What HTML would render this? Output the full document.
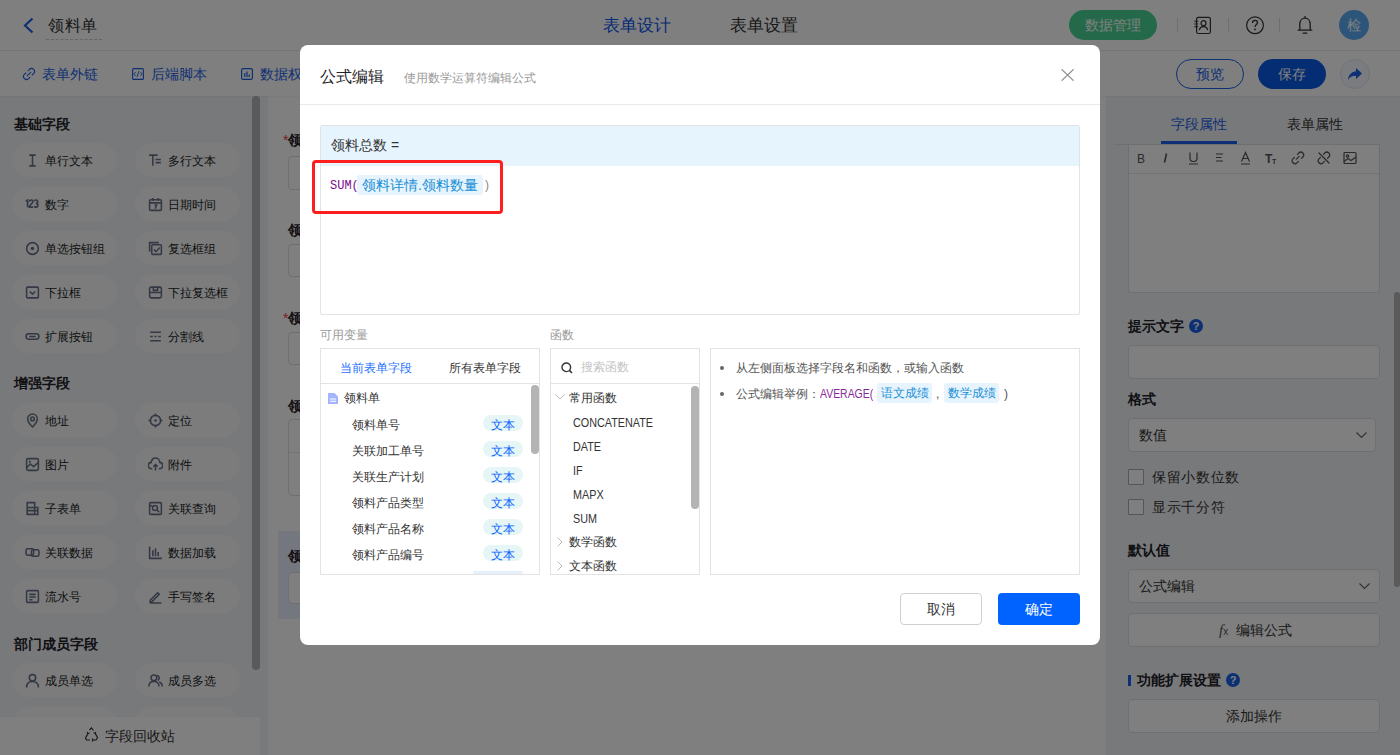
<!DOCTYPE html>
<html><head><meta charset="utf-8">
<style>
*{box-sizing:border-box;margin:0;padding:0}
html,body{width:1400px;height:755px;overflow:hidden;background:#fff}
body{font-family:"Liberation Sans",sans-serif;color:#333;position:relative;font-weight:350}
.a{position:absolute}
.nw{white-space:nowrap}
/* header */
#hdr{left:0;top:0;width:1400px;height:51px;background:#fff;border-bottom:1px solid #e6e8eb}
#bar2{left:0;top:51px;width:1400px;height:45px;background:#fff;box-shadow:0 1px 2px rgba(0,0,0,.05);z-index:1}
.lnk{font-size:14px;color:#1a5fe6;line-height:14px}
#side{left:0;top:96px;width:268px;height:659px;background:#f1f2f6}
.sec{font-size:14px;font-weight:bold;color:#1f2329;line-height:16px}
.chip{width:105px;height:34px;border-radius:17px;background:#f8f9fb}
.chip span{position:absolute;left:33px;top:12px;font-size:12px;line-height:12px;color:#1a1d23;white-space:nowrap;font-weight:400}
.chip svg{position:absolute;left:13px;top:9.5px;width:15px;height:15px}
#canvas{left:268px;top:96px;width:838px;height:659px;background:#fff}
#rp{left:1106px;top:96px;width:294px;height:659px;background:#f1f2f6}
.inp{background:#fff;border:1px solid #dcdfe6;border-radius:4px}
.lbl{font-size:14px;font-weight:bold;color:#1f2329;line-height:16px}
#ov{left:0;top:0;width:1400px;height:755px;background:rgba(0,0,0,.5);z-index:10}
/* modal */
#modal{left:300px;top:45px;width:800px;height:600px;background:#fff;border-radius:8px;overflow:hidden;z-index:11}
.m{position:absolute}
.nl{transform:scaleX(0.83);transform-origin:0 0;font-size:13px!important;margin-top:1px}
.nl2{transform:scaleX(0.87);transform-origin:0 0}
</style></head><body>

<!-- ============ HEADER ============ -->
<div id="hdr" class="a">
  <svg class="a" style="left:22px;top:17px" width="13" height="17" viewBox="0 0 13 17"><path d="M10.5 1.5 L3 8.5 L10.5 15.5" fill="none" stroke="#1a5fe6" stroke-width="2.2"/></svg>
  <div class="a nw" style="left:48px;top:17px;font-size:16px;line-height:18px;color:#333;letter-spacing:0.5px">领料单</div>
  <div class="a" style="left:46px;top:39px;width:56px;height:0;border-top:1px dashed #c8c8c8"></div>
  <div class="a nw" style="left:603px;top:16px;font-size:17px;line-height:19px;color:#0d56ee">表单设计</div>
  <div class="a nw" style="left:730px;top:16px;font-size:17px;line-height:19px;color:#333">表单设置</div>
  <div class="a" style="left:1069px;top:10px;width:88px;height:30px;border-radius:15px;background:#48d494"></div>
  <div class="a nw" style="left:1085px;top:17px;font-size:14px;line-height:16px;color:#fff">数据管理</div>
  <div class="a" style="left:1177px;top:18px;width:1px;height:14px;background:#ddd"></div>
  <div class="a" style="left:1228px;top:18px;width:1px;height:14px;background:#ddd"></div>
  <div class="a" style="left:1279px;top:18px;width:1px;height:14px;background:#ddd"></div>

  <svg class="a" style="left:1193px;top:16px" width="19" height="19" viewBox="0 0 19 19"><rect x="3.6" y="1.3" width="13.8" height="16.2" rx="1.8" fill="none" stroke="#333" stroke-width="1.2"/><circle cx="10.5" cy="7.2" r="2.5" fill="none" stroke="#333" stroke-width="1.2"/><path d="M6.3 14.2 C6.8 11.6 8.3 10.6 10.5 10.6 C12.7 10.6 14.2 11.6 14.7 14.2" fill="none" stroke="#333" stroke-width="1.2"/><path d="M1.2 5.2 H5.2 M1.2 8 H5.2 M1.2 10.8 H5.2" stroke="#333" stroke-width="1.1"/></svg>
  <svg class="a" style="left:1245px;top:15px" width="20" height="20" viewBox="0 0 20 20"><circle cx="10" cy="10.3" r="8.4" fill="none" stroke="#333" stroke-width="1.2"/><path d="M7.5 8 C7.5 6.3 8.6 5.4 10 5.4 C11.5 5.4 12.5 6.3 12.5 7.7 C12.5 9.5 10 9.6 10 11.9" fill="none" stroke="#333" stroke-width="1.3"/><circle cx="10" cy="14.4" r="0.9" fill="#333"/></svg>
  <svg class="a" style="left:1297px;top:15px" width="16" height="20" viewBox="0 0 16 20"><path d="M8 1.3 V2.8 M2.8 15.2 V9.2 C2.8 5.8 5 3.2 8 3.2 C11 3.2 13.2 5.8 13.2 9.2 V15.2 M1.2 15.2 H14.8 M6.2 18.2 H9.8" fill="none" stroke="#333" stroke-width="1.3" stroke-linecap="round"/></svg>
  <div class="a" style="left:1339px;top:10px;width:30px;height:30px;border-radius:15px;background:#5aabf5"></div>
  <div class="a nw" style="left:1347px;top:17px;font-size:14px;line-height:16px;color:#fff">检</div>
</div>

<!-- ============ BAR 2 ============ -->
<div id="bar2" class="a">
  <div class="a lnk nw" style="left:42px;top:16px">表单外链</div>
  <div class="a lnk nw" style="left:151px;top:16px">后端脚本</div>
  <div class="a lnk nw" style="left:260px;top:16px">数据权限</div>
  <div class="a" style="left:1176px;top:8px;width:68px;height:30px;border-radius:15px;border:1px solid #1a5fe6"></div>
  <div class="a nw" style="left:1196px;top:15px;font-size:14px;line-height:16px;color:#1a5fe6;font-weight:500">预览</div>
  <div class="a" style="left:1258px;top:8px;width:68px;height:30px;border-radius:15px;background:#0a5ae6"></div>
  <div class="a nw" style="left:1278px;top:15px;font-size:14px;line-height:16px;color:#fff;font-weight:500">保存</div>
  <div class="a" style="left:1340px;top:8px;width:30px;height:30px;border-radius:15px;border:1px solid #dfe6f5;background:#f5f8ff"></div>

  <svg class="a" style="left:22px;top:16px" width="14" height="14" viewBox="0 0 14 14"><path d="M5.3 8.7 L8.7 5.3 M6.2 3.6 L7.4 2.4 A2.8 2.8 0 0 1 11.6 6.6 L10.2 8 M3.8 6 L2.4 7.4 A2.8 2.8 0 0 0 6.6 11.6 L7.9 10.3" fill="none" stroke="#1a5fe6" stroke-width="1.1" stroke-linecap="round"/></svg>
  <svg class="a" style="left:132px;top:17px" width="12" height="12" viewBox="0 0 12 12"><rect x="0.6" y="0.6" width="10.8" height="10.8" rx="1" fill="none" stroke="#1a5fe6" stroke-width="1.1"/><path d="M3.6 4 L1.8 6 L3.6 8 M8.4 4 L10.2 6 L8.4 8 M7 3 L5 9" fill="none" stroke="#1a5fe6" stroke-width="0.9"/></svg>
  <svg class="a" style="left:241px;top:17px" width="12" height="12" viewBox="0 0 12 12"><rect x="0.6" y="0.6" width="10.8" height="10.8" rx="1.5" fill="none" stroke="#1a5fe6" stroke-width="1.2"/><path d="M3.8 5 V9 M6 3.5 V9 M8.2 6.5 V9" stroke="#1a5fe6" stroke-width="1.2"/></svg>
  <svg class="a" style="left:1346px;top:14px" width="18" height="18" viewBox="0 0 18 18"><path d="M10 3 L16 8.5 L10 14 V10.8 C6 10.8 3.6 12 2 15 C2.3 10.5 4.8 7 10 6.3 Z" fill="#1a5fe6"/></svg>
</div>

<!-- ============ SIDEBAR ============ -->
<div id="side" class="a">
<div class="a sec nw" style="left:14px;top:20px">基础字段</div>
<div class="a sec nw" style="left:14px;top:279px">增强字段</div>
<div class="a sec nw" style="left:14px;top:540px">部门成员字段</div>
<div class="a chip" style="left:12px;top:47px"><svg width="14" height="14" viewBox="0 0 14 14"><path d="M4 2 H10 M4 12 H10 M7 2 V12" fill="none" stroke="#687187" stroke-width="1.45"/></svg><span>单行文本</span></div>
<div class="a chip" style="left:135px;top:47px"><svg width="14" height="14" viewBox="0 0 14 14"><path d="M1 2 H9 M4.5 2 V12 M7 6 H12 M7 9 H12" fill="none" stroke="#687187" stroke-width="1.45"/></svg><span>多行文本</span></div>
<div class="a chip" style="left:12px;top:91px"><svg style="left:12px;top:12px;width:16px;height:9px" width="16" height="9" viewBox="0 0 14 9"><path d="M0.8 2.3 L2.6 1 V8.2 M4.4 2.6 C4.5 1.6 5.2 1 6.2 1 C7.2 1 7.9 1.7 7.9 2.6 C7.9 4.4 4.4 5.8 4.4 8.2 H8.1 M9.4 1.9 C9.7 1.3 10.3 1 11 1 C12 1 12.7 1.6 12.7 2.5 C12.7 3.5 12 4.3 10.8 4.3 C12.1 4.3 12.9 5 12.9 6.2 C12.9 7.4 12 8.2 10.9 8.2 C10.2 8.2 9.5 7.9 9.2 7.2" fill="none" stroke="#687187" stroke-width="1.7"/></svg><span>数字</span></div>
<div class="a chip" style="left:135px;top:91px"><svg width="14" height="14" viewBox="0 0 14 14"><rect x="1.5" y="2.5" width="11" height="10" rx="1" fill="none" stroke="#687187" stroke-width="1.45"/><path d="M1.5 5.5 H12.5 M4.5 1 V3.5 M9.5 1 V3.5 M6 7.5 H8 L6.8 11" fill="none" stroke="#687187" stroke-width="1.45"/></svg><span>日期时间</span></div>
<div class="a chip" style="left:12px;top:135px"><svg width="14" height="14" viewBox="0 0 14 14"><circle cx="7" cy="7" r="5.5" fill="none" stroke="#687187" stroke-width="1.45"/><circle cx="7" cy="7" r="1.6" fill="#687187"/></svg><span>单选按钮组</span></div>
<div class="a chip" style="left:135px;top:135px"><svg width="14" height="14" viewBox="0 0 14 14"><path d="M1.5 10 V1.5 H10" fill="none" stroke="#687187" stroke-width="1.45"/><rect x="3.5" y="3.5" width="9" height="9" rx="1" fill="none" stroke="#687187" stroke-width="1.45"/><path d="M5.5 8 L7.5 10 L11 6" fill="none" stroke="#687187" stroke-width="1.45"/></svg><span>复选框组</span></div>
<div class="a chip" style="left:12px;top:179px"><svg width="14" height="14" viewBox="0 0 14 14"><rect x="1.5" y="2" width="11" height="10" rx="1" fill="none" stroke="#687187" stroke-width="1.45"/><path d="M4.5 6 L7 8.5 L9.5 6" fill="none" stroke="#687187" stroke-width="1.45"/></svg><span>下拉框</span></div>
<div class="a chip" style="left:135px;top:179px"><svg width="14" height="14" viewBox="0 0 14 14"><rect x="1.5" y="2" width="11" height="10" rx="1.5" fill="none" stroke="#687187" stroke-width="1.45"/><path d="M1.5 7 H12.5 M5 2 V5 H9 V2" fill="none" stroke="#687187" stroke-width="1.45"/></svg><span>下拉复选框</span></div>
<div class="a chip" style="left:12px;top:223px"><svg width="14" height="14" viewBox="0 0 14 14"><rect x="1" y="4.5" width="12" height="5" rx="2.5" fill="none" stroke="#687187" stroke-width="1.45"/><path d="M4 7 H10" fill="none" stroke="#687187" stroke-width="1.45"/></svg><span>扩展按钮</span></div>
<div class="a chip" style="left:135px;top:223px"><svg width="14" height="14" viewBox="0 0 14 14"><path d="M2 3 H12 M2 11 H12 M2 7 H4.5 M6 7 H8 M9.5 7 H12" fill="none" stroke="#687187" stroke-width="1.45"/></svg><span>分割线</span></div>
<div class="a chip" style="left:12px;top:307px"><svg width="14" height="14" viewBox="0 0 14 14"><path d="M7 13 C3 9 2.5 7 2.5 5.5 A4.5 4.5 0 0 1 11.5 5.5 C11.5 7 11 9 7 13 Z" fill="none" stroke="#687187" stroke-width="1.45"/><circle cx="7" cy="5.5" r="1.7" fill="none" stroke="#687187" stroke-width="1.45"/></svg><span>地址</span></div>
<div class="a chip" style="left:135px;top:307px"><svg width="14" height="14" viewBox="0 0 14 14"><circle cx="7" cy="7" r="4.8" fill="none" stroke="#687187" stroke-width="1.45"/><circle cx="7" cy="7" r="1.2" fill="#687187"/><path d="M7 0.5 V3 M7 11 V13.5 M0.5 7 H3 M11 7 H13.5" fill="none" stroke="#687187" stroke-width="1.45"/></svg><span>定位</span></div>
<div class="a chip" style="left:12px;top:351px"><svg width="14" height="14" viewBox="0 0 14 14"><rect x="1.5" y="1.5" width="11" height="11" rx="1.5" fill="none" stroke="#687187" stroke-width="1.45"/><path d="M1.5 10 L5 6.5 L8 9 L12.5 5" fill="none" stroke="#687187" stroke-width="1.45"/><circle cx="4.5" cy="4.5" r="1" fill="#687187"/></svg><span>图片</span></div>
<div class="a chip" style="left:135px;top:351px"><svg width="14" height="14" viewBox="0 0 14 14"><path d="M4 11 H3.5 A3 3 0 0 1 3 5 A4 4 0 0 1 11 5 A3 3 0 0 1 10.5 11 H10 M7 12.5 V7 M5 9 L7 7 L9 9" fill="none" stroke="#687187" stroke-width="1.45"/></svg><span>附件</span></div>
<div class="a chip" style="left:12px;top:395px"><svg width="14" height="14" viewBox="0 0 14 14"><path d="M2 1.5 H9 V6 H12 V12.5 H2 Z M2 6 H9 V12.5 M2 9 H12" fill="none" stroke="#687187" stroke-width="1.45"/></svg><span>子表单</span></div>
<div class="a chip" style="left:135px;top:395px"><svg width="14" height="14" viewBox="0 0 14 14"><rect x="1.5" y="1.5" width="11" height="11" rx="1" fill="none" stroke="#687187" stroke-width="1.45"/><circle cx="6.5" cy="6.5" r="2.3" fill="none" stroke="#687187" stroke-width="1.45"/><path d="M8.3 8.3 L10.5 10.5 M1.5 4.5 H4" fill="none" stroke="#687187" stroke-width="1.45"/></svg><span>关联查询</span></div>
<div class="a chip" style="left:12px;top:439px"><svg width="14" height="14" viewBox="0 0 14 14"><rect x="1" y="3.5" width="7" height="6" rx="1.5" fill="none" stroke="#687187" stroke-width="1.45"/><rect x="6" y="4.5" width="7" height="6" rx="1.5" fill="none" stroke="#687187" stroke-width="1.45"/></svg><span>关联数据</span></div>
<div class="a chip" style="left:135px;top:439px"><svg width="14" height="14" viewBox="0 0 14 14"><path d="M1.5 1.5 V12.5 H13 M4.5 5 V10.5 M7 3 V10.5 M9.5 6.5 V10.5" fill="none" stroke="#687187" stroke-width="1.45"/></svg><span>数据加载</span></div>
<div class="a chip" style="left:12px;top:483px"><svg width="14" height="14" viewBox="0 0 14 14"><rect x="1.5" y="1.5" width="11" height="11" rx="1" fill="none" stroke="#687187" stroke-width="1.45"/><path d="M4 5 H10 M4 7.5 H10 M4 10 H7" fill="none" stroke="#687187" stroke-width="1.45"/></svg><span>流水号</span></div>
<div class="a chip" style="left:135px;top:483px"><svg width="14" height="14" viewBox="0 0 14 14"><path d="M2 10.5 L9 3.5 L10.5 5 L3.5 12 H2 Z M1.5 13 H12.5" fill="none" stroke="#687187" stroke-width="1.45"/></svg><span>手写签名</span></div>
<div class="a chip" style="left:12px;top:567px"><svg width="14" height="14" viewBox="0 0 14 14"><circle cx="7" cy="4.5" r="3" fill="none" stroke="#687187" stroke-width="1.45"/><path d="M1.5 13.5 C1.5 9.5 4 8 7 8 C10 8 12.5 9.5 12.5 13.5" fill="none" stroke="#687187" stroke-width="1.45"/></svg><span>成员单选</span></div>
<div class="a chip" style="left:135px;top:567px"><svg width="14" height="14" viewBox="0 0 14 14"><circle cx="5.5" cy="4.5" r="2.7" fill="none" stroke="#687187" stroke-width="1.45"/><path d="M0.8 12.5 C0.8 9 3 8 5.5 8 C8 8 10.2 9 10.2 12.5 M8.5 2 A2.7 2.7 0 0 1 9 7 M10.5 8.3 C12.2 9 13.3 10.3 13.3 12.5" fill="none" stroke="#687187" stroke-width="1.45"/></svg><span>成员多选</span></div>
<div class="a chip" style="left:12px;top:611px"></div>
<div class="a chip" style="left:135px;top:611px"></div>
<div class="a" style="left:252px;top:0;width:8px;height:574px;border-radius:4px;background:#b4b4b4"></div>
<div class="a" style="left:0;top:621px;width:260px;height:38px;background:#fff"></div>
<svg class="a" style="left:84px;top:631px" width="15" height="15" viewBox="0 0 15 15"><path d="M5.5 3 L7.5 1 L9.5 3.5 M11 6 L13.5 10.5 L12 13 H9 M6 13 H2.5 L1.5 11 L4 6.5" fill="none" stroke="#333" stroke-width="1.2"/><path d="M8 11.5 L9 13 L8 14.5 M3 5 L4 6.5 L5.6 6 M12 5 L11 6.3 L9.6 5.8" fill="none" stroke="#333" stroke-width="1.2"/></svg>
<div class="a nw" style="left:105px;top:632px;font-size:14px;line-height:16px;color:#333">字段回收站</div>
</div>

<!-- ============ CANVAS ============ -->
<div id="canvas" class="a">
  <div class="a nw" style="left:15px;top:36px;font-size:14px;line-height:16px;color:#f04040">*</div>
  <div class="a lbl nw" style="left:20px;top:36px">领料编号</div>
  <div class="a inp" style="left:20px;top:60px;width:800px;height:34px"></div>
  <div class="a lbl nw" style="left:20px;top:126px">领料日期</div>
  <div class="a inp" style="left:20px;top:148px;width:800px;height:33px"></div>
  <div class="a nw" style="left:15px;top:214px;font-size:14px;line-height:16px;color:#f04040">*</div>
  <div class="a lbl nw" style="left:20px;top:214px">领料人</div>
  <div class="a inp" style="left:20px;top:236px;width:800px;height:33px"></div>
  <div class="a lbl nw" style="left:20px;top:302px">领料说明</div>
  <div class="a inp" style="left:20px;top:323px;width:800px;height:77px"></div>
  <div class="a" style="left:21px;top:356px;width:798px;height:1px;background:#e4e6ea"></div>
  <div class="a" style="left:10px;top:435px;width:818px;height:88px;background:#e8eefa"></div>
  <div class="a lbl nw" style="left:20px;top:452px">领料总数</div>
  <div class="a inp" style="left:20px;top:476px;width:800px;height:32px"></div>
</div>

<!-- ============ RIGHT PANEL ============ -->
<div id="rp" class="a">
<div class="a nw" style="left:65px;top:20px;font-size:14px;line-height:16px;color:#1a5fe6">字段属性</div>
<div class="a nw" style="left:181px;top:20px;font-size:14px;line-height:16px;color:#333">表单属性</div>
<div class="a" style="left:8px;top:48px;width:266px;height:1px;background:#dcdfe6"></div>
<div class="a" style="left:55px;top:45px;width:76px;height:3px;background:#1a5fe6"></div>
<div class="a inp" style="left:22px;top:49px;width:252px;height:148px;border-radius:0 0 4px 4px;border-top:none"></div>
<div class="a" style="left:23px;top:77px;width:250px;height:1px;background:#e4e6ea"></div>
<svg class="a" style="left:29.0px;top:55px" width="14" height="14" viewBox="0 0 14 14"><text x="2" y="12" style="font-family:'Liberation Sans',sans-serif" font-size="12" fill="#555">B</text></svg>
<svg class="a" style="left:54.0px;top:55px" width="14" height="14" viewBox="0 0 14 14"><path d="M6.5 2.5 L4.5 11.5" stroke="#555" stroke-width="1.6"/></svg>
<svg class="a" style="left:81.0px;top:55px" width="14" height="14" viewBox="0 0 14 14"><path d="M3 1.5 V7.5 C3 9.8 4.5 10.5 6.5 10.5 C8.5 10.5 10 9.8 10 7.5 V1.5 M2 13 H11" fill="none" stroke="#555" stroke-width="1.2"/></svg>
<svg class="a" style="left:107.0px;top:55px" width="14" height="14" viewBox="0 0 14 14"><path d="M3 3 H10 M3 6.5 H8.5 M3 10 H10" fill="none" stroke="#555" stroke-width="1.2"/></svg>
<svg class="a" style="left:132.6px;top:55px" width="14" height="14" viewBox="0 0 14 14"><path d="M2.5 10.5 L6.5 1.5 L10.5 10.5 M4 7.5 H9 M2 13 H11" fill="none" stroke="#555" stroke-width="1.2"/></svg>
<svg class="a" style="left:158.5px;top:55px" width="14" height="14" viewBox="0 0 14 14"><text x="0" y="11.5" style="font-family:'Liberation Sans',sans-serif" font-weight="bold" font-size="12" fill="#555">T</text><text x="7" y="12.5" style="font-family:'Liberation Sans',sans-serif" font-weight="bold" font-size="7" fill="#555">T</text></svg>
<svg class="a" style="left:185.0px;top:55px" width="14" height="14" viewBox="0 0 14 14"><path d="M5.3 8.2 L8.2 5.3 M6.5 3.3 L7.8 2 A2.8 2.8 0 0 1 11.8 6 L10.5 7.3 M3.3 6.5 L2 7.8 A2.8 2.8 0 0 0 6 11.8 L7.3 10.5" fill="none" stroke="#555" stroke-width="1.2" stroke-linecap="round"/></svg>
<svg class="a" style="left:211.0px;top:55px" width="14" height="14" viewBox="0 0 14 14"><path d="M6.5 3.3 L7.8 2 A2.8 2.8 0 0 1 11.8 6 L10.5 7.3 M3.3 6.5 L2 7.8 A2.8 2.8 0 0 0 6 11.8 L7.3 10.5 M2 2 L12 12" fill="none" stroke="#555" stroke-width="1.2" stroke-linecap="round"/></svg>
<svg class="a" style="left:237.0px;top:55px" width="14" height="14" viewBox="0 0 14 14"><rect x="1" y="1.5" width="12" height="11" rx="1" fill="none" stroke="#555" stroke-width="1.2"/><circle cx="4.5" cy="5" r="1.2" fill="none" stroke="#555" stroke-width="1.2"/><path d="M1 10.5 L5 7.5 L8 9.5 L13 6" fill="none" stroke="#555" stroke-width="1.2"/></svg>
<div class="a lbl nw" style="left:22px;top:222px">提示文字</div>
<div class="a" style="left:83px;top:223px;width:14px;height:14px;border-radius:7px;background:#1a5fe6;color:#fff;font-size:11px;line-height:14px;text-align:center;font-weight:bold">?</div>
<div class="a inp" style="left:22px;top:249px;width:252px;height:34px"></div>
<div class="a lbl nw" style="left:22px;top:295px">格式</div>
<div class="a inp" style="left:22px;top:322px;width:248px;height:34px"></div>
<div class="a nw" style="left:33px;top:331px;font-size:14px;line-height:16px;color:#333">数值</div>
<svg class="a" style="left:250px;top:336px" width="11" height="7" viewBox="0 0 11 7"><path d="M0.5 0.5 L5.5 5.5 L10.5 0.5" fill="none" stroke="#666" stroke-width="1.2"/></svg>
<div class="a" style="left:22px;top:373px;width:16px;height:16px;border:1px solid #a9acb3;border-radius:1px;background:#fff"></div>
<div class="a nw" style="left:46px;top:373px;font-size:14px;line-height:16px;color:#333;letter-spacing:0.7px">保留小数位数</div>
<div class="a" style="left:22px;top:403px;width:16px;height:16px;border:1px solid #a9acb3;border-radius:1px;background:#fff"></div>
<div class="a nw" style="left:46px;top:403px;font-size:14px;line-height:16px;color:#333;letter-spacing:0.7px">显示千分符</div>
<div class="a lbl nw" style="left:22px;top:446px">默认值</div>
<div class="a inp" style="left:22px;top:473px;width:252px;height:34px"></div>
<div class="a nw" style="left:33px;top:482px;font-size:14px;line-height:16px;color:#333">公式编辑</div>
<svg class="a" style="left:253px;top:487px" width="11" height="7" viewBox="0 0 11 7"><path d="M0.5 0.5 L5.5 5.5 L10.5 0.5" fill="none" stroke="#666" stroke-width="1.2"/></svg>
<div class="a inp" style="left:22px;top:517px;width:252px;height:34px"></div>
<div class="a nw" style="left:113px;top:525px;font-family:'Liberation Serif',serif;font-style:italic;font-size:15px;line-height:18px;color:#555">f<span style="font-size:10px;font-style:normal;font-family:'Liberation Sans'">x</span></div>
<div class="a nw" style="left:130px;top:526px;font-size:14px;line-height:16px;color:#333">编辑公式</div>
<div class="a" style="left:22px;top:579px;width:3px;height:11px;background:#1a5fe6"></div>
<div class="a lbl nw" style="left:31px;top:576px">功能扩展设置</div>
<div class="a" style="left:120px;top:577px;width:14px;height:14px;border-radius:7px;background:#1a5fe6;color:#fff;font-size:11px;line-height:14px;text-align:center;font-weight:bold">?</div>
<div class="a inp" style="left:22px;top:603px;width:252px;height:34px"></div>
<div class="a nw" style="left:120px;top:612px;font-size:14px;line-height:16px;color:#333">添加操作</div>
<div class="a" style="left:288px;top:196px;width:6px;height:295px;border-radius:3px;background:#b4b4b4"></div>
</div>

<div id="ov" class="a"></div>

<!-- ============ MODAL ============ -->
<div id="modal" class="a">
  <div class="m nw" style="left:20px;top:22px;font-size:16px;line-height:20px;color:#1f2329">公式编辑</div>
  <div class="m nw" style="left:104px;top:25px;font-size:12px;line-height:16px;color:#999">使用数学运算符编辑公式</div>
  <svg class="m" style="left:761px;top:24px" width="13" height="12" viewBox="0 0 13 12"><path d="M0.6 0.3 L12.6 11.7 M12.6 0.3 L0.6 11.7" stroke="#8f8f8f" stroke-width="1.2"/></svg>
  <div class="m" style="left:0;top:59px;width:800px;height:1px;background:#e9e9e9"></div>
  <!-- formula box -->
  <div class="m" style="left:20px;top:80px;width:760px;height:190px;border:1px solid #e3e3e3;border-radius:2px"></div>
  <div class="m" style="left:21px;top:81px;width:758px;height:40px;background:#e6f4fe;border-radius:1px 1px 0 0"></div>
  <div class="m nw" style="left:31px;top:92px;font-size:14px;line-height:16px;color:#333">领料总数 =</div>
  <div class="m nw" style="left:30px;top:133px;font-family:'Liberation Mono',monospace;font-size:12px;line-height:16px;color:#7e0a8a">SUM(</div>
  <div class="m" style="left:57px;top:130px;width:126px;height:20px;border-radius:3px;background:#e8f4fd"></div>
  <div class="m nw" style="left:62px;top:131px;font-size:14px;line-height:18px;color:#1890d6">领料详情.领料数量</div>
  <div class="m nw" style="left:185px;top:132px;font-size:12px;line-height:16px;color:#888">)</div>
  <div class="m" style="left:12px;top:115px;width:191px;height:54px;border:3px solid #ff1e1e;border-radius:4px"></div>
  <!-- labels -->
  <div class="m nw" style="left:20px;top:283px;font-size:12px;line-height:14px;color:#999">可用变量</div>
  <div class="m nw" style="left:250px;top:283px;font-size:12px;line-height:14px;color:#999">函数</div>
  <!-- var panel -->
  <div class="m" style="left:20px;top:303px;width:220px;height:227px;border:1px solid #e3e3e3"></div>
  <div class="m" style="left:21px;top:338px;width:218px;height:1px;background:#e3e3e3"></div>
  <div class="m nw" style="left:40px;top:316px;font-size:12px;line-height:14px;color:#1e6fff">当前表单字段</div>
  <div class="m nw" style="left:149px;top:316px;font-size:12px;line-height:14px;color:#333">所有表单字段</div>
  <svg class="m" style="left:28px;top:348px" width="10" height="11" viewBox="0 0 10 11"><path d="M0 0 H6.5 L10 3.5 V11 H0 Z" fill="#a3b5ff"/><path d="M2 6 H8 M2 8.3 H8" stroke="#fff" stroke-width="1.1"/></svg>
  <div class="m nw" style="left:44px;top:346px;font-size:12px;line-height:14px;color:#333">领料单</div>
  <div class="m" style="left:231px;top:340px;width:8px;height:69px;border-radius:4px;background:#b4b4b4"></div>
  <div class="m nw" style="left:52px;top:373px;font-size:12px;line-height:14px;color:#333">领料单号</div><div class="m" style="left:183px;top:370px;width:40px;height:16px;border-radius:8px;background:#e6f6f7"></div><div class="m nw" style="left:191px;top:373px;font-size:12px;line-height:14px;color:#0a64ff">文本</div><div class="m nw" style="left:52px;top:399px;font-size:12px;line-height:14px;color:#333">关联加工单号</div><div class="m" style="left:183px;top:396px;width:40px;height:16px;border-radius:8px;background:#e6f6f7"></div><div class="m nw" style="left:191px;top:399px;font-size:12px;line-height:14px;color:#0a64ff">文本</div><div class="m nw" style="left:52px;top:425px;font-size:12px;line-height:14px;color:#333">关联生产计划</div><div class="m" style="left:183px;top:422px;width:40px;height:16px;border-radius:8px;background:#e6f6f7"></div><div class="m nw" style="left:191px;top:425px;font-size:12px;line-height:14px;color:#0a64ff">文本</div><div class="m nw" style="left:52px;top:451px;font-size:12px;line-height:14px;color:#333">领料产品类型</div><div class="m" style="left:183px;top:448px;width:40px;height:16px;border-radius:8px;background:#e6f6f7"></div><div class="m nw" style="left:191px;top:451px;font-size:12px;line-height:14px;color:#0a64ff">文本</div><div class="m nw" style="left:52px;top:477px;font-size:12px;line-height:14px;color:#333">领料产品名称</div><div class="m" style="left:183px;top:474px;width:40px;height:16px;border-radius:8px;background:#e6f6f7"></div><div class="m nw" style="left:191px;top:477px;font-size:12px;line-height:14px;color:#0a64ff">文本</div><div class="m nw" style="left:52px;top:503px;font-size:12px;line-height:14px;color:#333">领料产品编号</div><div class="m" style="left:183px;top:500px;width:40px;height:16px;border-radius:8px;background:#e6f6f7"></div><div class="m nw" style="left:191px;top:503px;font-size:12px;line-height:14px;color:#0a64ff">文本</div><div class="m" style="left:173px;top:526px;width:50px;height:3px;border-radius:9px;background:#e6f0fb"></div>
  <!-- func panel -->
  <div class="m" style="left:250px;top:303px;width:150px;height:227px;border:1px solid #e3e3e3"></div>
  <div class="m" style="left:251px;top:338px;width:148px;height:1px;background:#e3e3e3"></div>
  <svg class="m" style="left:261px;top:317px" width="12" height="12" viewBox="0 0 12 12"><circle cx="5.3" cy="5.3" r="4.3" fill="none" stroke="#333" stroke-width="1.4"/><path d="M8.4 8.4 L11 11" stroke="#333" stroke-width="1.5"/></svg>
  <div class="m nw" style="left:281px;top:315px;font-size:12px;line-height:14px;color:#c4c4c4">搜索函数</div>
  <div class="m" style="left:391px;top:341px;width:8px;height:123px;border-radius:4px;background:#b4b4b4"></div>
  <svg class="m" style="left:255px;top:349px" width="10" height="6" viewBox="0 0 10 6"><path d="M0.5 0.5 L5 5 L9.5 0.5" fill="none" stroke="#bbb" stroke-width="1"/></svg><div class="m nw" style="left:269px;top:346px;font-size:12px;line-height:14px;color:#333">常用函数</div><div class="m nw nl" style="left:273px;top:370px;font-size:12px;line-height:14px;color:#333">CONCATENATE</div><div class="m nw nl" style="left:273px;top:394px;font-size:12px;line-height:14px;color:#333">DATE</div><div class="m nw nl" style="left:273px;top:418px;font-size:12px;line-height:14px;color:#333">IF</div><div class="m nw nl" style="left:273px;top:442px;font-size:12px;line-height:14px;color:#333">MAPX</div><div class="m nw nl" style="left:273px;top:466px;font-size:12px;line-height:14px;color:#333">SUM</div><svg class="m" style="left:257px;top:492px" width="6" height="10" viewBox="0 0 6 10"><path d="M0.5 0.5 L5 5 L0.5 9.5" fill="none" stroke="#bbb" stroke-width="1"/></svg><div class="m nw" style="left:269px;top:490px;font-size:12px;line-height:14px;color:#333">数学函数</div><svg class="m" style="left:257px;top:516px" width="6" height="10" viewBox="0 0 6 10"><path d="M0.5 0.5 L5 5 L0.5 9.5" fill="none" stroke="#bbb" stroke-width="1"/></svg><div class="m nw" style="left:269px;top:514px;font-size:12px;line-height:14px;color:#333">文本函数</div>
  <!-- help panel -->
  <div class="m" style="left:410px;top:303px;width:370px;height:227px;border:1px solid #e3e3e3"></div>
  <div class="m" style="left:420px;top:321px;width:4px;height:4px;border-radius:2px;background:#666"></div>
  <div class="m nw" style="left:436px;top:316px;font-size:12px;line-height:14px;color:#555">从左侧面板选择字段名和函数，或输入函数</div>
  <div class="m" style="left:420px;top:347px;width:4px;height:4px;border-radius:2px;background:#666"></div>
  <div class="m nw" style="left:436px;top:342px;font-size:12px;line-height:14px;color:#555">公式编辑举例：</div>
  <div class="m nw nl2" style="left:520px;top:342px;font-size:12px;line-height:14px;color:#8a2a9a">AVERAGE(</div>
  <div class="m" style="left:577px;top:338px;width:55px;height:20px;border-radius:3px;background:#e8f4fd"></div>
  <div class="m nw" style="left:581px;top:341px;font-size:12px;line-height:14px;color:#1890d6">语文成绩</div>
  <div class="m nw" style="left:636px;top:342px;font-size:12px;line-height:14px;color:#555">,</div>
  <div class="m" style="left:644px;top:338px;width:55px;height:20px;border-radius:3px;background:#e8f4fd"></div>
  <div class="m nw" style="left:648px;top:341px;font-size:12px;line-height:14px;color:#1890d6">数学成绩</div>
  <div class="m nw" style="left:704px;top:342px;font-size:12px;line-height:14px;color:#555">)</div>
  <!-- buttons -->
  <div class="m" style="left:600px;top:548px;width:82px;height:32px;border:1px solid #d0d0d0;border-radius:4px;background:#fff"></div>
  <div class="m nw" style="left:627px;top:556px;font-size:14px;line-height:16px;color:#333">取消</div>
  <div class="m" style="left:698px;top:548px;width:82px;height:32px;border-radius:4px;background:#0062ff"></div>
  <div class="m nw" style="left:725px;top:556px;font-size:14px;line-height:16px;color:#fff;font-weight:500">确定</div>
</div>

</body></html>
